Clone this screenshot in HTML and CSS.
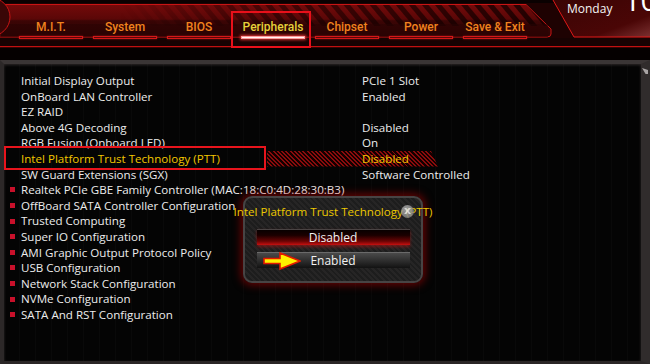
FILE: index.html
```html
<!DOCTYPE html>
<html lang="en">
<head>
<meta charset="utf-8">
<title>BIOS - Peripherals</title>
<link rel="stylesheet" href="styles.css">
</head>
<body>
<div class="screen">
  <header class="top">
    <svg class="top-art" width="650" height="60" viewBox="0 0 650 60" aria-hidden="true">
      <defs>
        <linearGradient id="band" x1="0" y1="0" x2="0" y2="1">
          <stop offset="0" stop-color="#740a0a"/>
          <stop offset="0.45" stop-color="#5a0707"/>
          <stop offset="0.5" stop-color="#3c0505"/>
          <stop offset="1" stop-color="#2a0303"/>
        </linearGradient>
        <linearGradient id="right" x1="0" y1="0" x2="1" y2="1">
          <stop offset="0" stop-color="#3a0404"/>
          <stop offset="0.7" stop-color="#4a0606"/>
          <stop offset="1" stop-color="#7a3030"/>
        </linearGradient>
        <linearGradient id="fade" x1="0" y1="0" x2="1" y2="0">
          <stop offset="0" stop-color="#fff" stop-opacity="0"/>
          <stop offset="0.35" stop-color="#fff" stop-opacity="0.6"/>
          <stop offset="1" stop-color="#fff" stop-opacity="1"/>
        </linearGradient>
        <mask id="fademask"><rect x="120" y="0" width="440" height="40" fill="url(#fade)"/></mask>
        <pattern id="stripes" width="10" height="10" patternUnits="userSpaceOnUse" patternTransform="rotate(-40)">
          <rect width="5" height="10" fill="#120000" opacity="0.8"/>
        </pattern>
      </defs>
      <rect width="650" height="48" fill="#1e0202"/>
      <rect width="650" height="3" fill="#0a0101"/>
      <path d="M553 0 L574 37 H650 V0 Z" fill="url(#right)"/>
      <path d="M553 0 L574 37 H650" fill="none" stroke="#e01818" stroke-width="1"/>
      <path d="M0 4.5 H526 L551 29 V34 Q551 37 547 37 H0 Z" fill="url(#band)" stroke="#c81414" stroke-width="1"/>
      <path d="M120 5 H526 L547 26 H120 Z" fill="url(#stripes)" mask="url(#fademask)"/>
      <rect x="0" y="24" width="548" height="13" fill="#2a0303" opacity="0.55"/>
      <rect x="0" y="38" width="650" height="8" fill="#170202"/>
      <rect x="0" y="46" width="650" height="1.5" fill="#c01010"/>
      <rect x="0" y="47.5" width="650" height="12.5" fill="#050000"/>
      <circle cx="-9" cy="17" r="19" fill="#3a0606" stroke="#c81414" stroke-width="1"/>
    </svg>
    <nav class="tabs">
      <div class="tab"><span class="tab-label">M.I.T.</span><span class="tab-bar"></span></div>
      <div class="tab"><span class="tab-label">System</span><span class="tab-bar"></span></div>
      <div class="tab"><span class="tab-label">BIOS</span><span class="tab-bar"></span></div>
      <div class="tab active"><span class="tab-label">Peripherals</span><span class="tab-bar"></span></div>
      <div class="tab"><span class="tab-label">Chipset</span><span class="tab-bar"></span></div>
      <div class="tab"><span class="tab-label">Power</span><span class="tab-bar"></span></div>
      <div class="tab"><span class="tab-label">Save &amp; Exit</span><span class="tab-bar"></span></div>
    </nav>
    <div class="clock">
      <span class="day">Monday</span>
      <span class="time">10:</span>
    </div>
  </header>

  <main class="panel">
    <ul class="settings">
      <li class="row"><span class="bullet"></span><span class="label">Initial Display Output</span><span class="value">PCIe 1 Slot</span></li>
      <li class="row"><span class="bullet"></span><span class="label">OnBoard LAN Controller</span><span class="value">Enabled</span></li>
      <li class="row"><span class="bullet"></span><span class="label">EZ RAID</span><span class="value"></span></li>
      <li class="row"><span class="bullet"></span><span class="label">Above 4G Decoding</span><span class="value">Disabled</span></li>
      <li class="row"><span class="bullet"></span><span class="label">RGB Fusion (Onboard LED)</span><span class="value">On</span></li>
      <li class="row selected"><span class="bullet"></span><span class="label">Intel Platform Trust Technology (PTT)</span><span class="value">Disabled</span></li>
      <li class="row"><span class="bullet"></span><span class="label">SW Guard Extensions (SGX)</span><span class="value">Software Controlled</span></li>
      <li class="row sub"><span class="bullet"></span><span class="label">Realtek PCIe GBE Family Controller (MAC:18:C0:4D:28:30:B3)</span><span class="value"></span></li>
      <li class="row sub"><span class="bullet"></span><span class="label">OffBoard SATA Controller Configuration</span><span class="value"></span></li>
      <li class="row sub"><span class="bullet"></span><span class="label">Trusted Computing</span><span class="value"></span></li>
      <li class="row sub"><span class="bullet"></span><span class="label">Super IO Configuration</span><span class="value"></span></li>
      <li class="row sub"><span class="bullet"></span><span class="label">AMI Graphic Output Protocol Policy</span><span class="value"></span></li>
      <li class="row sub"><span class="bullet"></span><span class="label">USB Configuration</span><span class="value"></span></li>
      <li class="row sub"><span class="bullet"></span><span class="label">Network Stack Configuration</span><span class="value"></span></li>
      <li class="row sub"><span class="bullet"></span><span class="label">NVMe Configuration</span><span class="value"></span></li>
      <li class="row sub"><span class="bullet"></span><span class="label">SATA And RST Configuration</span><span class="value"></span></li>
    </ul>

    <div class="dialog">
      <div class="dialog-title">Intel Platform Trust Technology (PTT)</div>
      <span class="close">x</span>
      <div class="options">
        <div class="option option-off">Disabled</div>
        <div class="option option-on">Enabled</div>
      </div>
      <svg class="arrow" width="38" height="20" viewBox="0 0 38 20" aria-hidden="true">
        <path d="M1 7.5 H17 V2 L37 10 L17 18 V12.5 H1 Z" fill="#fff000" stroke="#e21a00" stroke-width="1.6" stroke-linejoin="miter"/>
      </svg>
    </div>
  </main>
</div>
</body>
</html>
```

FILE: styles.css
```css
html, body {
  margin: 0;
  padding: 0;
  background: #000;
}

.screen {
  width: 650px;
  height: 364px;
  overflow: hidden;
  display: flex;
  flex-direction: column;
  font-family: "Open Sans", "DejaVu Sans", sans-serif;
  color: #ececec;
}

/* ---------- header ---------- */
.top {
  position: relative;
  height: 60px;
  flex: none;
  display: flex;
  align-items: flex-start;
}

.top-art {
  position: absolute;
  left: 0;
  top: 0;
}

.tabs {
  position: relative;
  display: flex;
  gap: 10px;
  padding-left: 19px;
}

.tab {
  position: relative;
  width: 64px;
  display: flex;
  flex-direction: column;
  align-items: center;
  padding-top: 19px;
}

.tab-label {
  font-family: Roboto, "Open Sans", sans-serif;
  font-weight: 500;
  font-size: 12px;
  line-height: 16px;
  color: #f0821e;
  white-space: nowrap;
}

.tab-bar {
  margin-top: 1px;
  width: 64px;
  height: 3px;
  box-sizing: border-box;
  border: 1px solid #d41818;
  background: #5a0707;
  box-shadow: 0 0 2px rgba(255, 40, 40, 0.6);
}

.tab.active .tab-label {
  color: #e6d23a;
}

.tab.active .tab-bar {
  background: #fff4f4;
  border-color: #ff9a9a;
  box-shadow: 0 0 3px 1px rgba(255, 60, 60, 0.8);
}

.tab.active::after {
  content: "";
  position: absolute;
  left: -10px;
  right: -6px;
  top: 11px;
  height: 37px;
  box-sizing: border-box;
  border: 2px solid #e8101a;
}

.clock {
  position: relative;
  margin-left: auto;
  display: flex;
  align-items: flex-start;
  gap: 11px;
  width: 83px;
}

.day {
  font-size: 12px;
  line-height: 14px;
  margin-top: 1.5px;
  color: #f4f4f4;
}

.time {
  font-family: "Open Sans", sans-serif;
  font-weight: 400;
  font-size: 30px;
  line-height: 30px;
  margin-top: -15px;
  color: #ffffff;
}

/* ---------- main panel ---------- */
.panel {
  position: relative;
  flex: 1;
  box-sizing: border-box;
  border-top: 4px solid #3a3535;
  border-left: 4px solid #2c2828;
  border-right: 9px solid #302c2c;
  border-bottom: 3px solid #2a2626;
  background:
    repeating-linear-gradient(90deg, transparent 0 15px, rgba(255, 255, 255, 0.018) 15px 16px),
    #040404;
  box-shadow: inset 0 1px 3px rgba(90, 80, 80, 0.5);
  padding: 9px 0 0 6px;
}

.panel::after {
  content: "";
  position: absolute;
  top: 4px;
  right: -7px;
  width: 6px;
  height: 6px;
  background: #a8a4a4;
  clip-path: polygon(0 0, 100% 35%, 100% 100%, 60% 100%);
}

.settings {
  list-style: none;
  margin: 0;
  padding: 0;
}

.row {
  position: relative;
  display: grid;
  grid-template-columns: 11px 341px 1fr;
  align-items: center;
  height: 15.6px;
  line-height: 15.6px;
  font-size: 11.6px;
  white-space: nowrap;
}

.label, .value {
  position: relative;
  z-index: 1;
}

.bullet {
  width: 5px;
  height: 5px;
}

.row.sub .bullet {
  background: #c8102a;
}

.row.selected {
  color: #f2c600;
}

.row.selected::before {
  content: "";
  position: absolute;
  left: 257px;
  width: 171px;
  top: 0;
  bottom: 0;
  background: repeating-linear-gradient(45deg, #8a0c0c 0 1.4px, #140000 1.4px 3px);
  clip-path: polygon(0 0, calc(100% - 7px) 0, 100% 100%, 0 100%);
}

.row.selected::after {
  content: "";
  position: absolute;
  left: -6px;
  width: 262px;
  top: -5px;
  height: 24px;
  box-sizing: border-box;
  border: 2px solid #e8141c;
  z-index: 2;
}

/* ---------- dialog ---------- */
.dialog {
  position: absolute;
  left: 239px;
  top: 132px;
  width: 180px;
  height: 87px;
  box-sizing: border-box;
  border: 2px solid #474444;
  border-radius: 9px;
  background:
    repeating-linear-gradient(45deg, #1d1d1d 0 2px, #262525 2px 4px);
  box-shadow: 0 0 8px 2px rgba(190, 0, 0, 0.55);
  display: flex;
  flex-direction: column;
  align-items: center;
  padding-top: 7px;
  z-index: 3;
}

.dialog-title {
  font-size: 11.6px;
  line-height: 14px;
  white-space: nowrap;
  color: #ecc800;
}

.close {
  position: absolute;
  left: 156px;
  top: 7px;
  width: 13px;
  height: 13px;
  border-radius: 50%;
  background: radial-gradient(circle at 40% 35%, #b4b4b4, #6c6c6c);
  color: #f4f4f4;
  font-family: "DejaVu Sans", sans-serif;
  font-size: 11px;
  font-weight: bold;
  line-height: 12px;
  text-align: center;
  opacity: 0.85;
}

.options {
  margin-top: 10px;
  width: 153px;
  display: flex;
  flex-direction: column;
  gap: 7px;
}

.option {
  height: 16px;
  box-sizing: border-box;
  font-size: 12px;
  line-height: 15px;
  text-align: center;
  color: #f2f2f2;
}

.option-off {
  border-top: 1px solid #4a4444;
  background: linear-gradient(to bottom, #080000 0%, #1a0000 35%, #6c0404 75%, #c81010 100%);
  box-shadow: 0 2px 3px rgba(220, 20, 20, 0.45);
}

.option-on {
  border-top: 1px solid #6a6a6a;
  background: linear-gradient(to bottom, #4a4a4a 0%, #2c2c2c 55%, #121212 100%);
}

.arrow {
  position: absolute;
  left: 18px;
  top: 53px;
}
```
